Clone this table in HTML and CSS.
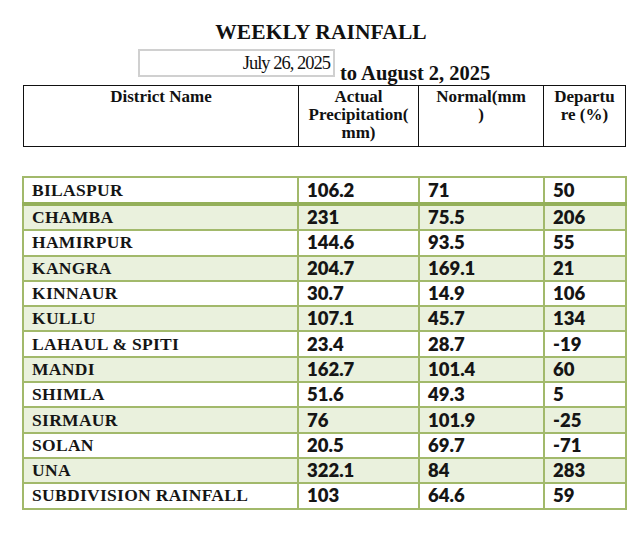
FILE: index.html
```html
<!DOCTYPE html>
<html>
<head>
<meta charset="utf-8">
<link rel="stylesheet" href="styles.css">
</head>
<body>
<div class="page">
  <h1 class="title">WEEKLY RAINFALL</h1>
  <div class="dates">
    <div class="datebox">July 26, 2025</div>
    <span class="to">to August 2, 2025</span>
  </div>
  <table class="head">
    <tr>
      <th class="c1">District Name</th>
      <th class="c2">Actual Precipitation(<br>mm)</th>
      <th class="c3">Normal(mm<br>)</th>
      <th class="c4">Departu<br>re (%)</th>
    </tr>
  </table>
  <table class="data">
    <tr class="first"><td class="name">BILASPUR</td><td>106.2</td><td>71</td><td>50</td></tr>
    <tr class="alt"><td class="name">CHAMBA</td><td>231</td><td>75.5</td><td>206</td></tr>
    <tr><td class="name">HAMIRPUR</td><td>144.6</td><td>93.5</td><td>55</td></tr>
    <tr class="alt"><td class="name">KANGRA</td><td>204.7</td><td>169.1</td><td>21</td></tr>
    <tr><td class="name">KINNAUR</td><td>30.7</td><td>14.9</td><td>106</td></tr>
    <tr class="alt"><td class="name">KULLU</td><td>107.1</td><td>45.7</td><td>134</td></tr>
    <tr><td class="name">LAHAUL &amp; SPITI</td><td>23.4</td><td>28.7</td><td>-19</td></tr>
    <tr class="alt"><td class="name">MANDI</td><td>162.7</td><td>101.4</td><td>60</td></tr>
    <tr><td class="name">SHIMLA</td><td>51.6</td><td>49.3</td><td>5</td></tr>
    <tr class="alt"><td class="name">SIRMAUR</td><td>76</td><td>101.9</td><td>-25</td></tr>
    <tr><td class="name">SOLAN</td><td>20.5</td><td>69.7</td><td>-71</td></tr>
    <tr class="alt"><td class="name">UNA</td><td>322.1</td><td>84</td><td>283</td></tr>
    <tr><td class="name">SUBDIVISION RAINFALL</td><td>103</td><td>64.6</td><td>59</td></tr>
  </table>
</div>
</body>
</html>
```
FILE: styles.css
```css
html, body {
  margin: 0;
  padding: 0;
  background: #ffffff;
}
.page {
  width: 642px;
  height: 540px;
  position: relative;
  font-family: "Liberation Serif", serif;
  color: #111;
}
.title {
  margin: 0;
  padding-top: 20px;
  text-align: center;
  font-size: 21.5px;
  line-height: 24px;
  font-weight: bold;
  letter-spacing: 0.1px;
}
.dates {
  display: flex;
  align-items: flex-end;
  margin-top: 3px;
  padding-left: 138px;
  height: 38px;
}
.datebox {
  width: 190px;
  height: 24px;
  border: 2px solid #d0d0d0;
  font-size: 18.5px;
  line-height: 24px;
  text-align: right;
  padding-right: 3px;
  letter-spacing: -1px;
  box-sizing: content-box;
  margin-bottom: 8px;
}
.to {
  font-weight: bold;
  font-size: 20.5px;
  line-height: 22px;
  margin-left: 5px;
  margin-bottom: 1px;
}
table {
  border-collapse: collapse;
}
.head {
  margin-left: 23px;
  width: 603px;
  height: 62px;
}
.head th {
  border: 1px solid #111;
  vertical-align: top;
  font-size: 17px;
  line-height: 18px;
  padding: 2px 2px 0;
  text-align: center;
}
.head .c1 { width: 270px; }
.head .c2 { width: 115px; }
.head .c3 { width: 120px; }
.head .c4 { width: 77px; }
.data {
  margin-top: 29px;
  margin-left: 22px;
  width: 605px;
  table-layout: fixed;
}
.data td {
  border: 2px solid #a2b96b;
  height: 21.3px;
  padding: 1px 8px 1px 8px;
  font-family: "Lato", sans-serif;
  font-weight: 800;
  font-size: 18.5px;
  line-height: 21px;
  color: #151515;
}
.data td:nth-child(1) { width: 257px; }
.data td:nth-child(2) { width: 103px; }
.data td:nth-child(3) { width: 107px; }
.data td.name {
  font-family: "Liberation Serif", serif;
  font-weight: bold;
  font-size: 17.5px;
  letter-spacing: 0.3px;
}
.data tr.first td {
  border-bottom: 4px solid #94b05a;
  height: 22px;
}
.data tr.alt td {
  background: #eaf1dd;
}
```
